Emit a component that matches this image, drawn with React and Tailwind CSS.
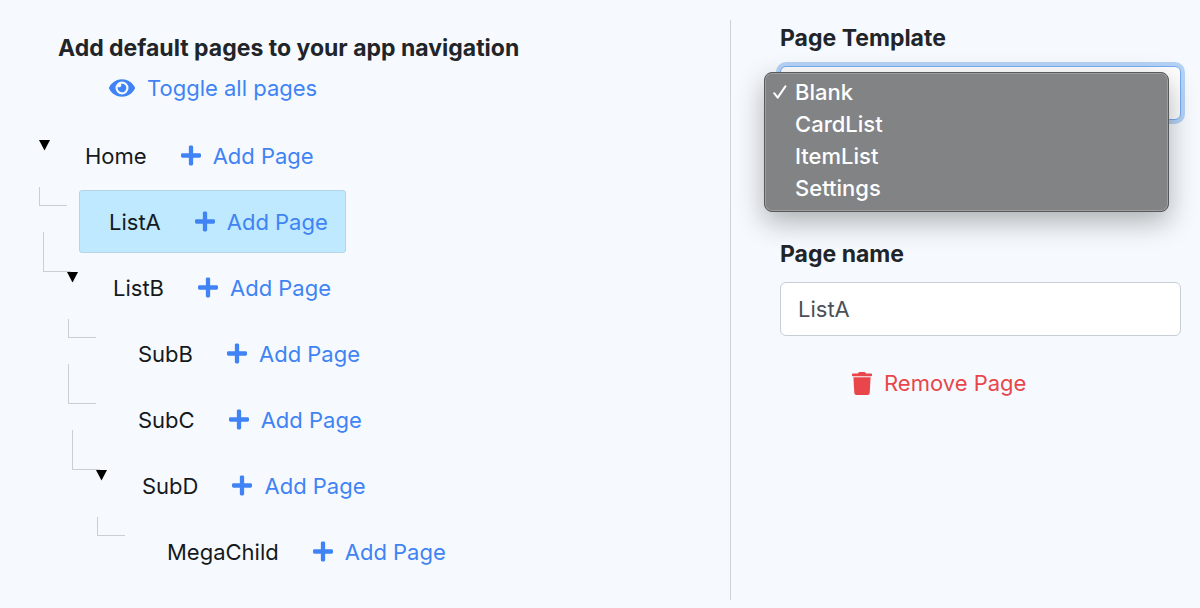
import React, { useState } from 'react';
import { FaEye, FaPlus } from 'react-icons/fa';
import clsx from 'clsx';

const TEMPLATES = ['Blank', 'CardList', 'ItemList', 'Settings'];

const PAGES = {
    name: 'Home',
    children: [
        { name: 'ListA' },
        {
            name: 'ListB',
            children: [
                { name: 'SubB' },
                { name: 'SubC' },
                { name: 'SubD', children: [{ name: 'MegaChild' }] },
            ],
        },
    ],
};

const TrashIcon = () => (
    <svg viewBox="0 0 20 23" className="h-[23px] w-5" fill="currentColor" aria-hidden="true">
        <path d="M0.7 1.4H5.9L6.6 0.4Q6.9 0 7.5 0H12.5Q13.1 0 13.4 0.4L14.1 1.4H19.3Q20 1.4 20 2.1V3.6Q20 4.3 19.3 4.3H0.7Q0 4.3 0 3.6V2.1Q0 1.4 0.7 1.4Z" />
        <path d="M1.4 5.2H18.6L17.7 21Q17.5 23 15.6 23H4.4Q2.5 23 2.3 21Z" />
    </svg>
);

const PageNode = ({ page, selected, onSelect, root, first }) => {
    const [open, setOpen] = useState(true);
    const hasChildren = Boolean(page.children);
    const active = selected === page.name;

    return (
        <li>
            <div className={clsx('flex h-[66px] items-start', hasChildren && 'ml-1')}>
                <span
                    className={clsx(
                        'w-7 shrink-0 border-[#cccfd2]',
                        !root && 'border-b border-l',
                        first ? '-mt-[3px] h-[19px]' : '-mt-6 h-10',
                        !hasChildren && 'mr-3'
                    )}
                />
                {hasChildren && (
                    <button
                        type="button"
                        aria-label={`Toggle ${page.name}`}
                        onClick={() => setOpen(!open)}
                        className="mt-4 mr-1 -ml-1 w-3 shrink-0 text-black"
                    >
                        <svg viewBox="0 0 12 11" className="h-[11px] w-3" fill="currentColor" aria-hidden="true">
                            <path d="M0 0H11L5.5 10.5Z" />
                        </svg>
                    </button>
                )}
                <div
                    className={clsx(
                        'flex h-[63px] items-center rounded-[3px] border pl-[29px]',
                        active ? 'border-[#b5d5e6] bg-[#bfe9ff]' : 'border-transparent'
                    )}
                >
                    <button type="button" onClick={() => onSelect(page.name)} className="text-[#16191c]">
                        {page.name}
                    </button>
                    <button type="button" className="ml-[17px] flex items-center gap-3 px-[17px] text-[#4083f4]">
                        <FaPlus className="h-[23px] w-5" />
                        Add Page
                    </button>
                </div>
            </div>
            {hasChildren && open && (
                <ul className={root ? 'ml-7' : 'ml-[29px]'}>
                    {page.children.map((child, i) => (
                        <PageNode
                            key={child.name}
                            page={child}
                            selected={selected}
                            onSelect={onSelect}
                            first={i === 0}
                        />
                    ))}
                </ul>
            )}
        </li>
    );
};

const App = () => {
    const [selected, setSelected] = useState('ListA');
    const [name, setName] = useState('ListA');
    const [template, setTemplate] = useState('Blank');

    const handleSelect = (pageName) => {
        setSelected(pageName);
        setName(pageName);
    };

    return (
        <main className="grid min-h-screen grid-cols-[730fr_470fr] bg-[#f6fafe] font-['Inter',sans-serif] text-[22px] leading-8 text-[#212529]">
            <section className="pt-8">
                <h1 className="pl-[58px] text-[23px] leading-8 font-bold">Add default pages to your app navigation</h1>
                <button type="button" className="mt-2 ml-[109px] flex items-center gap-3 text-[#4083f4]">
                    <FaEye className="size-[26px]" />
                    Toggle all pages
                </button>
                <ul className="mt-5 ml-[11px]">
                    <PageNode page={PAGES} selected={selected} onSelect={handleSelect} root first />
                </ul>
            </section>

            <section className="mt-5 mb-2 border-l border-[#cfd3d8] pr-[19px] pl-[49px]">
                <label htmlFor="template" className="block text-[23px] leading-9 font-bold">Page Template</label>
                <div className="relative mt-2.5">
                    <select
                        id="template"
                        value={template}
                        onChange={(e) => setTemplate(e.target.value)}
                        className="block h-[54px] w-full appearance-none rounded-md border border-[#76aef5] bg-white px-[17px] text-white ring-4 ring-[#b6d3f7] outline-none"
                    >
                        {TEMPLATES.map((t) => <option key={t}>{t}</option>)}
                    </select>
                    <ul
                        role="listbox"
                        aria-label="Page Template"
                        className="absolute top-1.5 right-3 -left-4 rounded-lg border border-[#58595b] bg-[#818385] pt-[3px] pb-[7px] font-medium text-white shadow-[inset_0_0_0_1px_#9c9ea0,0_10px_28px_rgba(0,0,0,0.3)]"
                    >
                        {TEMPLATES.map((t) => (
                            <li
                                key={t}
                                role="option"
                                aria-selected={t === template}
                                onClick={() => setTemplate(t)}
                                className="flex items-center pl-2"
                            >
                                <span className="w-[22px]">
                                    {t === template && (
                                        <svg viewBox="0 0 14 14" className="size-3.5" fill="none" stroke="currentColor" strokeWidth="2" strokeLinecap="round" strokeLinejoin="round" aria-hidden="true">
                                            <path d="M1.2 8.2L4.7 12.6L12.4 1.4" />
                                        </svg>
                                    )}
                                </span>
                                {t}
                            </li>
                        ))}
                    </ul>
                </div>

                <label htmlFor="page-name" className="mt-[116px] block text-[23px] leading-9 font-bold">Page name</label>
                <input
                    id="page-name"
                    type="text"
                    value={name}
                    onChange={(e) => setName(e.target.value)}
                    className="mt-2.5 block h-[54px] w-full rounded-md border border-[#c8ced5] bg-white px-[17px] text-[#495057] outline-none"
                />
                <button type="button" className="mt-[31px] ml-[72px] flex items-center gap-3 text-[#e8464b]">
                    <TrashIcon />
                    Remove Page
                </button>
            </section>
        </main>
    );
};

export default App;
